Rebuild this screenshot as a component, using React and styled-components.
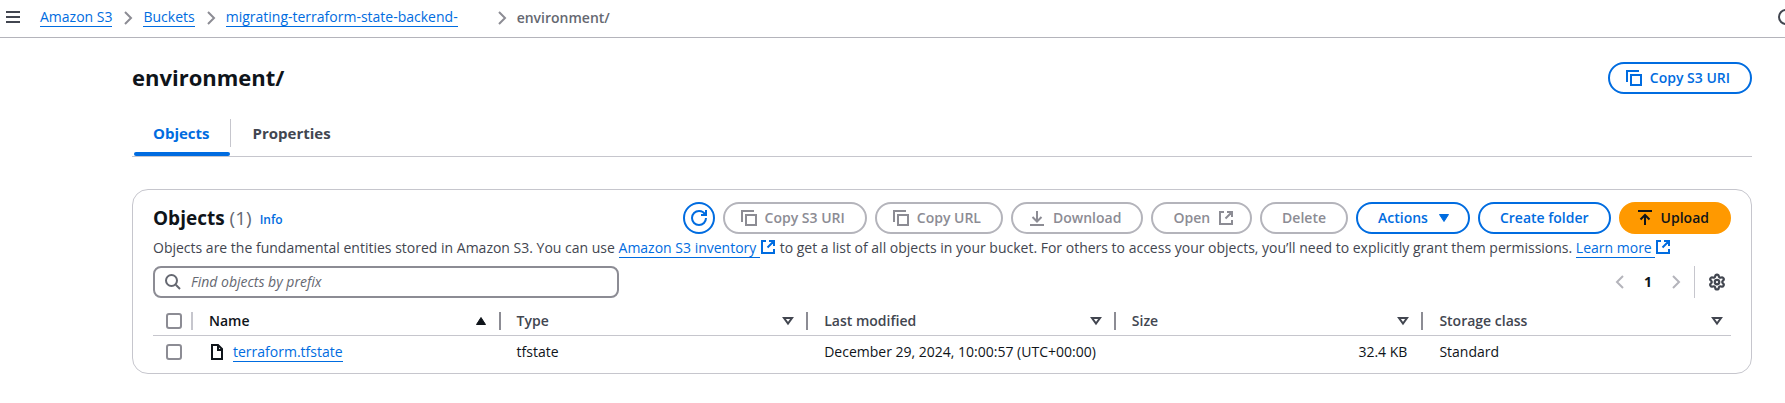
import React, { useState } from 'react'
import styled, { createGlobalStyle, css } from 'styled-components'
import { Settings } from 'lucide-react'

const columns = [
  { key: 'name', label: 'Name', sorted: true },
  { key: 'type', label: 'Type' },
  { key: 'modified', label: 'Last modified' },
  { key: 'size', label: 'Size' },
  { key: 'storage', label: 'Storage class' },
]

const objects = [
  { name: 'terraform.tfstate', type: 'tfstate', modified: 'December 29, 2024, 10:00:57 (UTC+00:00)', size: '32.4 KB', storage: 'Standard' },
]

const paths = {
  menu: 'M1 3h14M1 8h14M1 13h14',
  next: 'M5 2l6 6-6 6',
  prev: 'M11 2L5 8l6 6',
  copy: 'M1 12V1h12M5 5h10v10H5z',
  refresh: 'M10 5h5V0M15 8a7 7 0 0 1-14 0 7 7 0 0 1 7-7 6.9 6.9 0 0 1 6.3 4',
  download: 'M1 15h14M8 1v10M3.5 7L8 11.5 12.5 7',
  upload: 'M1 1h14M8 15V5M3.5 9.5L8 5l4.5 4.5',
  external: 'M6 2H2v12h12v-4M9 2h5v5M14 2L7.5 8.5',
  search: 'M11 11l4 4M12 6.5a5.5 5.5 0 1 1-11 0 5.5 5.5 0 0 1 11 0z',
  info: 'M15 8A7 7 0 1 1 1 8a7 7 0 0 1 14 0z',
  file: 'M9 1H3v14h10V5L9 1zM9 1v5h4',
  sort: 'M4 5h8l-4 5.5z',
}

function Icon({ name }) {
  return (
    <Svg viewBox="0 0 16 16" aria-hidden="true">
      <path d={paths[name]} />
    </Svg>
  )
}

function App() {
  const [query, setQuery] = useState('')
  const [selected, setSelected] = useState([])

  const toggle = (name) => {
    setSelected(selected.includes(name) ? selected.filter((n) => n !== name) : [...selected, name])
  }

  const toggleAll = () => {
    setSelected(selected.length ? [] : objects.map((o) => o.name))
  }

  return (
    <>
      <GlobalStyle />
      <TopBar>
        <IconButton aria-label="Open navigation"><Icon name="menu" /></IconButton>
        <Crumbs aria-label="Breadcrumbs">
          <Crumb><Link href="#s3">Amazon S3</Link></Crumb>
          <Crumb><Icon name="next" /><Link href="#buckets">Buckets</Link></Crumb>
          <Crumb $wide><Icon name="next" /><Link href="#bucket">migrating-terraform-state-backend-</Link></Crumb>
          <Crumb><Icon name="next" /><b>environment/</b></Crumb>
        </Crumbs>
        <InfoButton aria-label="Info"><Icon name="info" /></InfoButton>
      </TopBar>

      <Main>
        <TitleRow>
          <h1>environment/</h1>
          <Button><Icon name="copy" />Copy S3 URI</Button>
        </TitleRow>

        <Tabs role="tablist">
          <Tab role="tab" aria-selected="true" $active>Objects</Tab>
          <Tab role="tab" aria-selected="false">Properties</Tab>
        </Tabs>

        <Card>
          <CardHeader>
            <Heading>Objects <Counter>(1)</Counter></Heading>
            <InfoLink href="#info">Info</InfoLink>
            <Actions>
              <Button $round aria-label="Refresh"><Icon name="refresh" /></Button>
              <Button disabled><Icon name="copy" />Copy S3 URI</Button>
              <Button disabled><Icon name="copy" />Copy URL</Button>
              <Button disabled><Icon name="download" />Download</Button>
              <Button disabled>Open<EndIcon><Icon name="external" /></EndIcon></Button>
              <Button disabled>Delete</Button>
              <Button aria-haspopup="menu">Actions<EndIcon><Caret viewBox="0 0 16 16"><path d="M3.5 4.5h9L8 11.5z" /></Caret></EndIcon></Button>
              <Button>Create folder</Button>
              <Button $primary><Icon name="upload" />Upload</Button>
            </Actions>
          </CardHeader>

          <Description>
            Objects are the fundamental entities stored in Amazon S3. You can use{' '}
            <Link href="#inventory">Amazon S3 inventory&nbsp;</Link><LinkIcon><Icon name="external" /></LinkIcon>{' '}
            to get a list of all objects in your bucket. For others to access your objects, you’ll need to explicitly grant them permissions.{' '}
            <Link href="#learn">Learn more&nbsp;</Link><LinkIcon><Icon name="external" /></LinkIcon>
          </Description>

          <Tools>
            <SearchBox>
              <Icon name="search" />
              <input
                type="text"
                aria-label="Find objects by prefix"
                placeholder="Find objects by prefix"
                value={query}
                onChange={(e) => setQuery(e.target.value)}
              />
            </SearchBox>
            <Pagination>
              <IconButton $muted aria-label="Previous page"><Icon name="prev" /></IconButton>
              <PageNumber>1</PageNumber>
              <IconButton $muted aria-label="Next page"><Icon name="next" /></IconButton>
            </Pagination>
            <Preferences>
              <IconButton aria-label="Preferences"><Settings size={18} strokeWidth={3} /></IconButton>
            </Preferences>
          </Tools>

          <Table>
            <thead>
              <tr>
                <th>
                  <HeadCell>
                    <Checkbox aria-label="Select all" checked={selected.length > 0} onChange={toggleAll} />
                  </HeadCell>
                </th>
                {columns.map((c) => (
                  <th key={c.key} aria-sort={c.sorted ? 'ascending' : undefined}>
                    <HeadCell $sorted={c.sorted}>
                      {c.label}
                      {c.sorted
                        ? <Caret viewBox="0 0 16 16"><path d="M3.5 11.5h9L8 4.5z" /></Caret>
                        : <Icon name="sort" />}
                    </HeadCell>
                  </th>
                ))}
              </tr>
            </thead>
            <tbody>
              {objects.map((o) => (
                <tr key={o.name}>
                  <td>
                    <Checkbox aria-label={'Select ' + o.name} checked={selected.includes(o.name)} onChange={() => toggle(o.name)} />
                  </td>
                  <td><FileName><Icon name="file" /><Link href="#object">{o.name}</Link></FileName></td>
                  <td>{o.type}</td>
                  <td>{o.modified}</td>
                  <SizeCell>{o.size}</SizeCell>
                  <td>{o.storage}</td>
                </tr>
              ))}
            </tbody>
          </Table>
        </Card>
      </Main>
    </>
  )
}

const GlobalStyle = createGlobalStyle`
  * {
    box-sizing: border-box;
  }
  body {
    margin: 0;
    background-color: #ffffff;
    color: #0f141a;
    font-family: "Open Sans", "Noto Sans", sans-serif;
    font-size: 14px;
    line-height: 20px;
  }
  button, input {
    font: inherit;
  }
  b, th {
    font-weight: 600;
  }
`

const Svg = styled.svg`
  flex: none;
  width: 16px;
  height: 16px;
  fill: none;
  stroke: currentColor;
  stroke-width: 2;
`

const Caret = styled(Svg)`
  fill: currentColor;
  stroke-width: 1;
  stroke-linejoin: round;
`

const Link = styled.a`
  color: #006ce0;
  text-decoration: none;
  border-bottom: 1px solid #006ce0;
`

const IconButton = styled.button`
  display: flex;
  padding: 0;
  border: none;
  background: none;
  color: ${(p) => (p.$muted ? '#b4b4bb' : '#424650')};
`

const InfoButton = styled(IconButton)`
  flex: none;
  margin-left: auto;
  margin-right: -9px;
`

const TopBar = styled.header`
  display: flex;
  align-items: center;
  height: 38px;
  padding: 0 0 4px 5px;
  overflow: hidden;
  border-bottom: 1px solid #b4b4bb;
`

const Crumbs = styled.nav`
  display: flex;
  margin-left: 19px;
  padding-top: 2px;
`

const Crumb = styled.span`
  display: flex;
  align-items: center;
  line-height: 18px;
  color: #656871;
  margin-right: ${(p) => (p.$wide ? '36px' : '8px')};

  > svg {
    margin-right: 7px;
    color: #8c8c94;
  }
`

const Main = styled.main`
  padding: 24px 33px 29px 132px;
`

const TitleRow = styled.div`
  display: flex;
  align-items: center;
  justify-content: space-between;

  h1 {
    margin: 0;
    padding-bottom: 2px;
    font-size: 22px;
    line-height: 30px;
  }
`

const Button = styled.button`
  display: flex;
  align-items: center;
  justify-content: center;
  gap: 8px;
  height: 32px;
  padding: 0 20px;
  border: 2px solid #006ce0;
  border-radius: 20px;
  background-color: #ffffff;
  color: #006ce0;
  font-weight: 600;
  white-space: nowrap;

  > svg {
    margin-left: -4px;
  }
  &:disabled {
    border-color: #b4b4bb;
    color: #8c8c94;
  }
  ${(p) => p.$round && css`
    width: 32px;
    padding: 0;

    > svg {
      margin-left: 0;
    }
  `}
  ${(p) => p.$primary && css`
    border-color: #ff9900;
    background-color: #ff9900;
    color: #0f141a;
  `}
`

const EndIcon = styled.span`
  display: flex;
  margin-right: -4px;
`

const Tabs = styled.div`
  display: flex;
  margin-top: 21px;
  padding-left: 1px;
  border-bottom: 1px solid #c6c6cd;
`

const Tab = styled.button`
  position: relative;
  height: 41px;
  padding: 0 21px 6px 20px;
  border: none;
  background: linear-gradient(#c6c6cd, #c6c6cd) right 4px / 1px 28px no-repeat;
  color: #424650;
  font-size: 15px;
  font-weight: 700;

  &:last-child {
    padding-left: 22px;
    background: none;
  }
  ${(p) => p.$active && css`
    color: #006ce0;

    &::after {
      content: '';
      position: absolute;
      left: 1px;
      right: 1px;
      bottom: 0;
      height: 4px;
      border-radius: 4px;
      background-color: #006ce0;
    }
  `}
`

const Card = styled.section`
  margin-top: 32px;
  padding: 12px 20px 4px;
  border: 1px solid #c6c6cd;
  border-radius: 16px;
`

const CardHeader = styled.div`
  display: flex;
  align-items: center;
`

const Heading = styled.h2`
  margin: 0;
  font-size: 19px;
  line-height: 24px;
`

const Counter = styled.span`
  color: #656871;
  font-weight: 400;
`

const InfoLink = styled.a`
  margin: 4px 0 0 8px;
  color: #006ce0;
  font-size: 12px;
  font-weight: 600;
  text-decoration: none;
`

const Actions = styled.div`
  display: flex;
  gap: 8px;
  margin-left: auto;
`

const Description = styled.p`
  margin: 4px 0 8px;
  color: #424650;
`

const LinkIcon = styled.span`
  color: #006ce0;

  svg {
    vertical-align: -2px;
  }
`

const Tools = styled.div`
  display: flex;
  align-items: center;
`

const SearchBox = styled.label`
  display: flex;
  align-items: center;
  gap: 10px;
  width: 466px;
  height: 32px;
  padding: 0 10px;
  border: 2px solid #8c8c94;
  border-radius: 8px;
  color: #656871;

  input {
    flex: 1;
    min-width: 0;
    padding: 0;
    border: none;
    outline: none;
    background: none;
  }
  input::placeholder {
    color: #656871;
    font-style: italic;
  }
`

const Pagination = styled.div`
  display: flex;
  align-items: center;
  gap: 16px;
  margin-left: auto;
`

const PageNumber = styled.span`
  width: 8px;
  font-weight: 700;
`

const Preferences = styled.div`
  display: flex;
  align-items: center;
  height: 32px;
  margin-left: 10px;
  padding: 0 5px 0 13px;
  border-left: 1px solid #c6c6cd;
`

const Table = styled.table`
  width: 100%;
  margin-top: 9px;
  border-collapse: collapse;
  table-layout: fixed;

  th {
    height: 28px;
    padding: 0;
    border-bottom: 1px solid #c6c6cd;
    text-align: left;
  }
  th:first-child {
    width: 40px;
  }
  td {
    height: 34px;
    padding: 0 16px;
  }
  td:first-child {
    padding: 0 0 0 13px;
  }
`

const HeadCell = styled.div`
  display: flex;
  align-items: center;
  justify-content: space-between;
  height: 18px;
  padding: 0 6px 0 16px;
  border-right: 2px solid #8c8c94;
  color: ${(p) => (p.$sorted ? '#0f141a' : '#424650')};

  th:not(:first-child) & {
    padding-right: 10px;
  }
  th:first-child & {
    padding: 0 0 0 13px;
    border-color: #c6c6cd;
  }
  th:last-child & {
    padding-right: 6px;
    border: none;
  }
`

const Checkbox = styled.input.attrs({ type: 'checkbox' })`
  appearance: none;
  display: block;
  width: 16px;
  height: 16px;
  margin: 0;
  border: 2px solid #8c8c94;
  border-radius: 3px;

  &:checked {
    border-color: #006ce0;
    background-color: #006ce0;
  }
`

const FileName = styled.span`
  display: flex;
  align-items: center;
  gap: 8px;
  line-height: 18px;
`

const SizeCell = styled.td`
  text-align: right;
`

export default App
